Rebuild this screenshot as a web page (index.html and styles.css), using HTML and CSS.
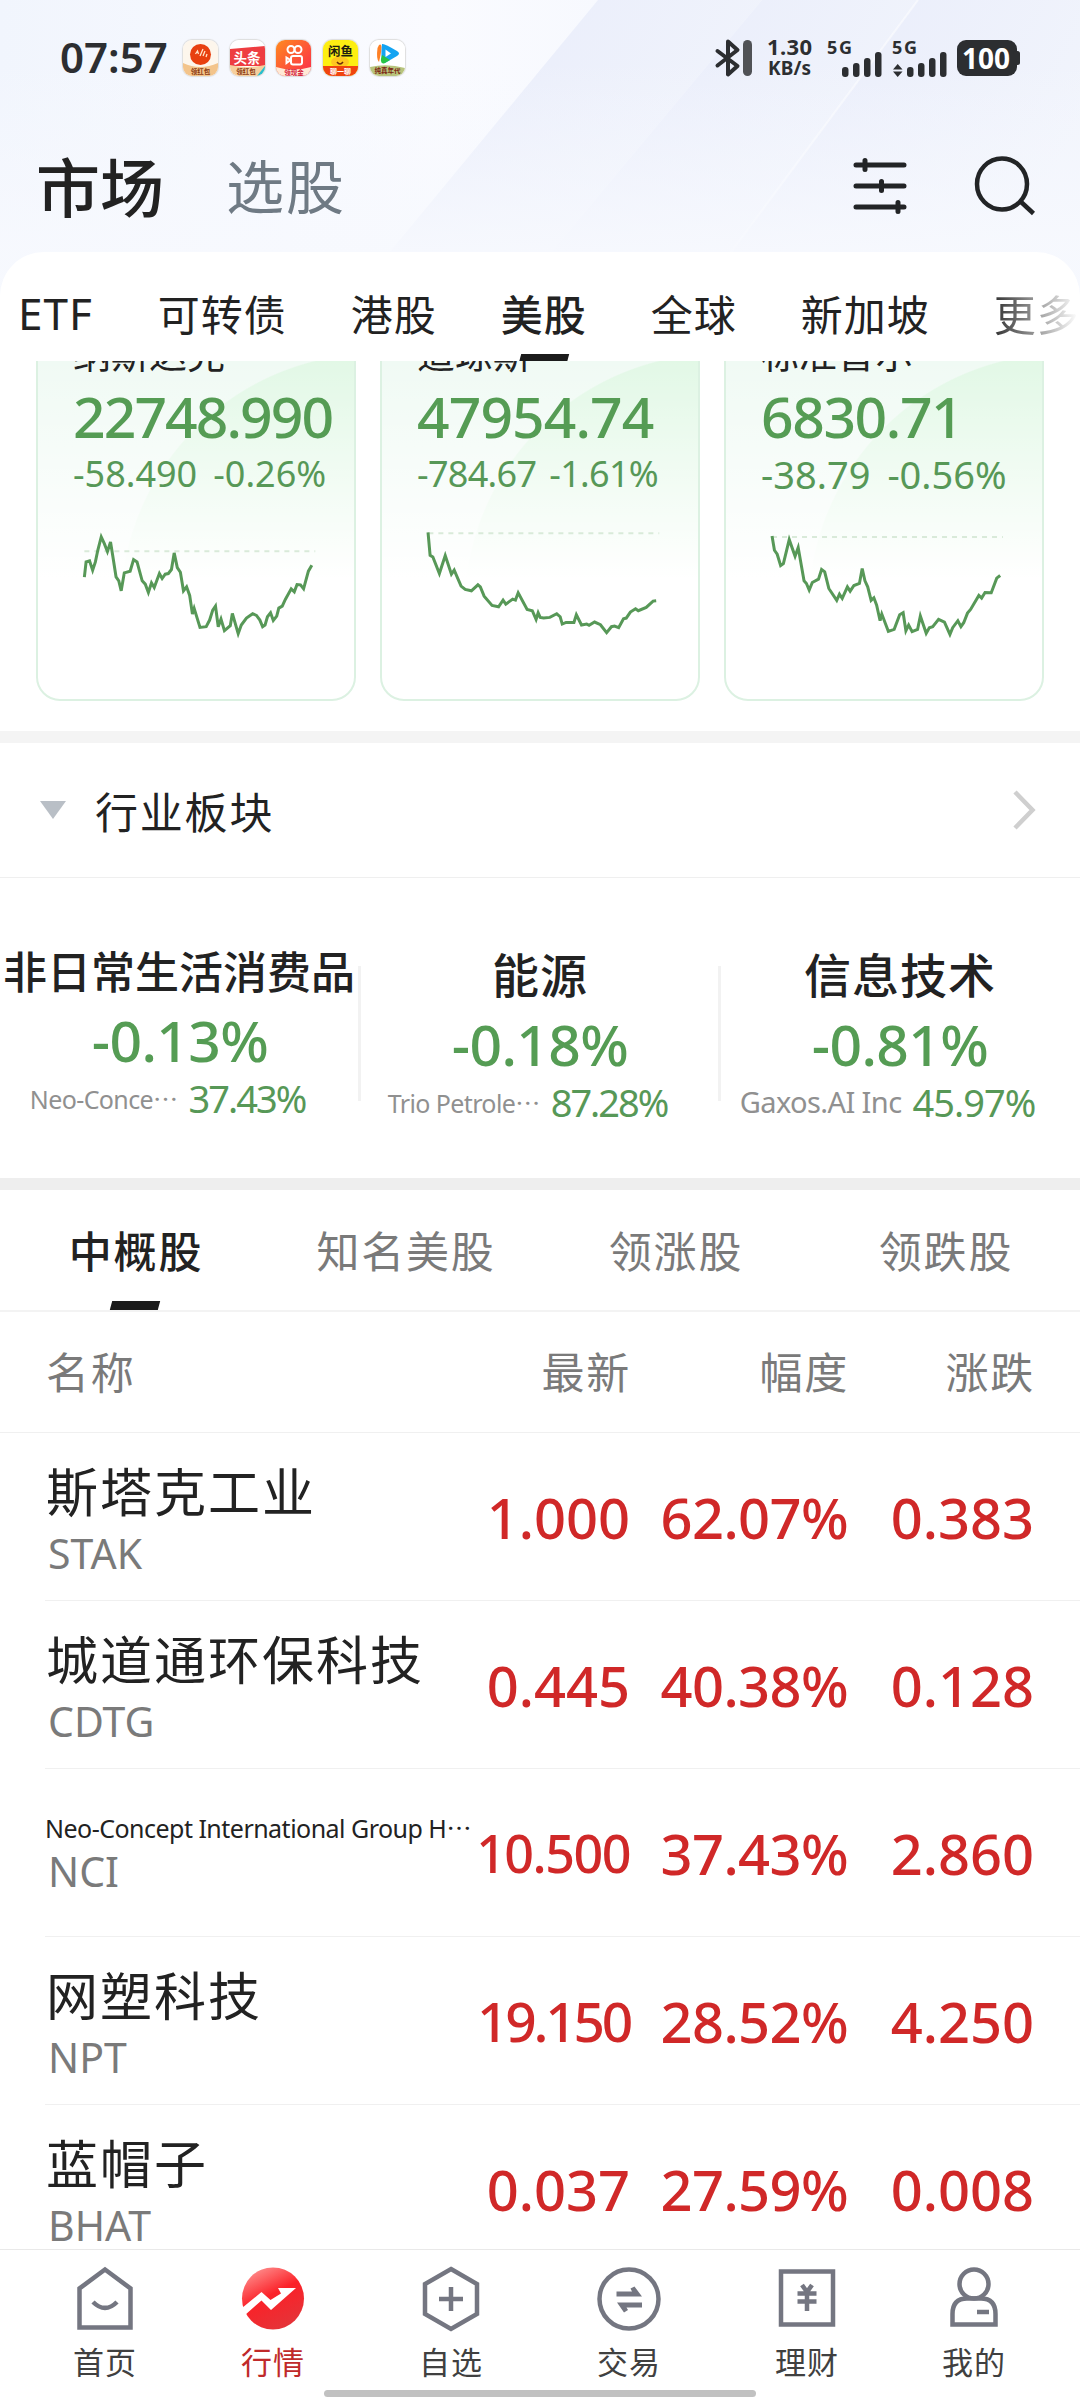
FILE: index.html
```html
<!DOCTYPE html>
<html lang="zh-CN">
<head>
  <meta charset="UTF-8">
  <title>市场</title>
  <link rel="stylesheet" href="styles.css">
</head>
<body>
<div class="page">
  <div class="top">
    <svg class="top-bg" viewBox="0 0 1080 310">
      <defs>
        <linearGradient id="base" x1="0" y1="0" x2="1" y2="0">
          <stop offset="0" stop-color="#f1f5fd"/>
          <stop offset="0.4" stop-color="#fafbff"/>
          <stop offset="1" stop-color="#eff3fc"/>
        </linearGradient>
        <linearGradient id="band" x1="0" y1="0" x2="1" y2="0.4">
          <stop offset="0" stop-color="#e6eafa"/>
          <stop offset="1" stop-color="#f1f4fc"/>
        </linearGradient>
        <linearGradient id="fade" x1="0" y1="0" x2="0" y2="1">
          <stop offset="0.2" stop-color="#f7f9fe" stop-opacity="0"/>
          <stop offset="0.8" stop-color="#f7f9fe" stop-opacity="0.9"/>
        </linearGradient>
      </defs>
      <rect width="1080" height="310" fill="url(#base)"/>
      <polygon points="598,0 762,0 503,310 342,310" fill="url(#band)"/>
      <polygon points="762,0 918,0 688,310 503,310" fill="url(#band)"/>
      <polygon points="918,0 1080,0 1080,310 688,310" fill="url(#band)"/>
      <path d="M918 0L688 310" stroke="#fff" stroke-width="2" opacity="0.5"/>
      <rect width="1080" height="310" fill="url(#fade)"/>
    </svg>
    <div class="status">
      <span class="clock">07:57</span>
      <div class="apps">
        <svg class="app" viewBox="0 0 35 36">
          <rect width="35" height="36" fill="#fdf6ec"/>
          <circle cx="17.500" cy="14.500" r="10.500" fill="#e8400f"/>
          <path d="M12.500 14l2-3 1 3M17 16l3-7M20 16l2-5M23 17l1-3" stroke="#ffe3c8" stroke-width="1.300" fill="none"/>
          <path d="M0 23Q17 31 35 23V36H0z" fill="#f3c48b"/>
          <text x="17.500" y="34" font-size="6.500" fill="#8c3a12">领红包</text>
        </svg>
        <svg class="app" viewBox="0 0 35 36">
          <rect width="35" height="36" fill="#fff"/>
          <path d="M0 9L35 6V26H0z" fill="#ee3d41"/>
          <text x="17" y="23" font-size="13.500" fill="#fff">头条</text>
          <path d="M0 25Q17 29 35 25V36H0z" fill="#f6cf9d"/>
          <text x="16" y="34" font-size="6.500" fill="#8c3a12">领红包</text>
          <path d="M27 36L35 26V36z" fill="#27bfd0"/>
        </svg>
        <svg class="app" viewBox="0 0 35 36">
          <defs>
            <linearGradient id="ks" x1="0" y1="0" x2="1" y2="1">
              <stop offset="0" stop-color="#ff8a1f"/>
              <stop offset="1" stop-color="#fb2a4c"/>
            </linearGradient>
          </defs>
          <rect width="35" height="36" fill="url(#ks)"/>
          <g fill="none" stroke="#fff" stroke-width="2">
            <circle cx="15" cy="9.500" r="3.500"/>
            <circle cx="22" cy="9.500" r="3.500"/>
            <rect x="15" y="16" width="11" height="8.500" rx="2"/>
            <path d="M14.500 20L10.500 17.500V23z"/>
          </g>
          <path d="M0 27Q17 32 35 27V36H0z" fill="#ffe9d6"/>
          <text x="18" y="34.500" font-size="6.500" fill="#d4203c">领现金</text>
        </svg>
        <svg class="app" viewBox="0 0 35 36">
          <rect width="35" height="36" fill="#fdee12"/>
          <text x="17.500" y="16" font-size="12.500" fill="#1d1d10">闲鱼</text>
          <ellipse cx="17" cy="22" rx="9" ry="5.500" fill="#ffc720"/>
          <path d="M14 22q3 4 6 0" stroke="#6b2c0c" stroke-width="1.500" fill="none"/>
          <path d="M0 26H35V36H0z" fill="#f0440f"/>
          <text x="17.500" y="34" font-size="7" fill="#fff">聊一聊</text>
        </svg>
        <svg class="app" viewBox="0 0 35 36">
          <rect width="35" height="36" fill="#fff"/>
          <path d="M9 5Q14 2 9 22Q6 19 7.500 8z" fill="#ff8125"/>
          <path d="M12 4Q14 3 27 11Q31 13.500 27 16L15 23Q10 24 12 4z" fill="#14a4f2"/>
          <path d="M12 15L20 20L14 23.500Q9 24 12 15z" fill="#28c445"/>
          <path d="M15.500 9.500L21 13.500L15.500 17z" fill="#fff"/>
          <path d="M0 27Q17 23 35 28V36H0z" fill="#b8c47c"/>
          <text x="17.500" y="32.500" font-size="6.500" fill="#7b1e12">纯真年代</text>
        </svg>
      </div>
      <svg class="system" viewBox="712 36 310 46">
        <path d="M717.500 51L737.500 66L728 74.500V41.500L737.500 50L717.500 65.500" fill="none" stroke="#2c2e31" stroke-width="4" stroke-linecap="round" stroke-linejoin="round"/>
        <rect x="743" y="40" width="9" height="36" rx="4.500" fill="#505256"/>
        <g class="sys-text">
          <text x="767" y="55" font-size="22" textLength="45">1.30</text>
          <text x="768" y="75" font-size="19" textLength="43">KB/s</text>
          <text x="827" y="54" font-size="18" textLength="25">5G</text>
          <text x="892" y="54" font-size="18" textLength="25">5G</text>
        </g>
        <g fill="#2c2e31">
          <rect x="842" y="67" width="6.500" height="10" rx="3"/>
          <rect x="853" y="63" width="6.500" height="14" rx="3"/>
          <rect x="864" y="58" width="6.500" height="19" rx="3"/>
          <rect x="875" y="52" width="6.500" height="25" rx="3"/>
          <path d="M893 69.500h9.500L897.700 64zM893 71.500h9.500L897.700 77z"/>
          <rect x="907" y="67" width="6.500" height="10" rx="3"/>
          <rect x="918" y="63" width="6.500" height="14" rx="3"/>
          <rect x="929" y="58" width="6.500" height="19" rx="3"/>
          <rect x="940" y="52" width="6.500" height="25" rx="3"/>
          <rect x="957" y="40" width="60" height="36" rx="9"/>
          <rect x="1013" y="51" width="7" height="14" rx="2.500"/>
        </g>
        <text class="battery" x="986" y="68.500" font-size="28" textLength="48">100</text>
      </svg>
    </div>
    <div class="nav">
      <span class="nav-on">市场</span>
      <span class="nav-off">选股</span>
      <svg class="nav-icon filter" viewBox="0 0 58 58">
        <path d="M4 8H52M4 29H52M4 50H52" stroke="#222426" stroke-width="5" stroke-linecap="round"/>
        <path d="M13 3.500V12.500M29.500 24.500V33.500M46 45.500V54.500" stroke="#222426" stroke-width="5" stroke-linecap="round"/>
      </svg>
      <svg class="nav-icon" viewBox="0 0 62 60">
        <ellipse cx="28" cy="28" rx="25" ry="25.500" fill="none" stroke="#222426" stroke-width="4.500"/>
        <path d="M46 45L59.500 57.500" stroke="#222426" stroke-width="4.500"/>
      </svg>
    </div>
    <div class="markets">
      <span class="latin">ETF</span>
      <span>可转债</span>
      <span>港股</span>
      <span class="on">美股</span>
      <span>全球</span>
      <span>新加坡</span>
      <span class="more">更多</span>
    </div>
  </div>

  <div class="content">
    <div class="cards">
      <div class="card">
        <div class="card-name">纳斯达克</div>
        <div class="card-value tight">22748.990</div>
        <div class="card-change"><span>-58.490</span><span>-0.26%</span></div>
        <svg class="chart" viewBox="240 860 680 340" preserveAspectRatio="none">
          <path class="base" d="M244 933H915"/>
          <path class="line" d="M244 1011L249 965L259 962L268 990L276 965L283 930L293 890L302 910L311 934L320 905L327 950L336 1010L344 1022L351 1052L360 998L377 993L387 958L397 965L412 1022L421 1032L430 1057L439 1028L447 1042L462 1000L470 1015L479 1002L488 1000L497 988L505 938L514 982L523 996L532 1052L541 1040L550 1066L558 1122L563 1105L580 1162L598 1160L608 1140L617 1110L625 1098L633 1160L641 1137L651 1172L668 1157L674 1120L691 1181L700 1155L715 1134L733 1121L744 1126L754 1140L762 1160L769 1155L776 1130L785 1118L793 1141L803 1128L809 1104L819 1098L828 1078L845 1046L854 1055L862 1033L872 1034L881 1046L895 993L905 975"/>
        </svg>
      </div>
      <div class="card">
        <div class="card-name">道琼斯</div>
        <div class="card-value">47954.74</div>
        <div class="card-change narrow"><span>-784.67</span><span>-1.61%</span></div>
        <svg class="chart" viewBox="1239 860 680 340" preserveAspectRatio="none">
          <path class="base" d="M1243 879H1914"/>
          <path class="line" d="M1242 876L1248 945L1256 950L1275 1000L1292 946L1310 1002L1318 990L1338 1038L1350 1048L1368 1052L1387 1034L1394 1040L1405 1068L1428 1096L1447 1100L1460 1080L1468 1092L1488 1077L1496 1080L1504 1058L1530 1108L1545 1112L1556 1138L1562 1118L1568 1132L1578 1134L1596 1132L1616 1121L1626 1130L1632 1152L1643 1147L1666 1147L1673 1124L1688 1155L1703 1152L1710 1156L1726 1146L1743 1154L1761 1178L1775 1160L1784 1158L1796 1163L1810 1136L1818 1134L1830 1116L1845 1106L1853 1112L1876 1102L1896 1083L1905 1082"/>
        </svg>
      </div>
      <div class="card">
        <div class="card-name">标准普尔</div>
        <div class="card-value short">6830.71</div>
        <div class="card-change big"><span>-38.79</span><span>-0.56%</span></div>
        <svg class="chart" viewBox="670 860 680 340" preserveAspectRatio="none">
          <path class="base" d="M673 890H1344"/>
          <path class="line" d="M673 887L680 930L688 942L698 976L706 970L723 898L740 948L749 922L766 1022L773 1030L781 1050L790 1027L808 1017L817 988L826 995L838 1045L861 1081L869 1062L877 1075L892 1040L900 1053L911 1036L927 1030L935 985L943 1022L951 1040L961 1081L969 1073L977 1095L987 1142L992 1122L1011 1174L1028 1168L1044 1124L1054 1118L1062 1172L1070 1155L1080 1175L1096 1168L1104 1128L1121 1180L1130 1163L1140 1160L1157 1138L1174 1146L1190 1183L1198 1163L1213 1142L1222 1160L1230 1148L1241 1119L1250 1108L1274 1066L1282 1074L1292 1057L1310 1058L1326 1014L1336 1006"/>
        </svg>
      </div>
    </div>

    <div class="section-head">
      <span class="caret"></span>
      <span class="section-title">行业板块</span>
      <svg class="arrow" viewBox="0 0 24 42">
        <path d="M3 3L20.500 21L3 39" fill="none" stroke="#cfcfcf" stroke-width="4.500"/>
      </svg>
    </div>
    <div class="sectors">
      <div class="sector sector-long">
        <div class="sector-name">非日常生活消费品</div>
        <div class="sector-pct">-0.13%</div>
        <div class="sector-lead"><span class="lead-name">Neo-Conce<i>⋯</i></span><span class="lead-pct">37.43%</span></div>
      </div>
      <div class="sector">
        <div class="sector-name">能源</div>
        <div class="sector-pct">-0.18%</div>
        <div class="sector-lead"><span class="lead-name">Trio Petrole<i>⋯</i></span><span class="lead-pct">87.28%</span></div>
      </div>
      <div class="sector">
        <div class="sector-name">信息技术</div>
        <div class="sector-pct">-0.81%</div>
        <div class="sector-lead"><span class="lead-name large">Gaxos.AI Inc</span><span class="lead-pct wide">45.97%</span></div>
      </div>
    </div>

    <div class="tabs">
      <span class="on">中概股</span>
      <span>知名美股</span>
      <span>领涨股</span>
      <span>领跌股</span>
    </div>
    <div class="row head">
      <span>名称</span><span>最新</span><span>幅度</span><span>涨跌</span>
    </div>
    <div class="list">
      <div class="row">
        <div class="stock"><b>斯塔克工业</b><small>STAK</small></div>
        <span>1.000</span><span class="pct">62.07%</span><span>0.383</span>
      </div>
      <div class="row">
        <div class="stock"><b>城道通环保科技</b><small>CDTG</small></div>
        <span>0.445</span><span class="pct">40.38%</span><span>0.128</span>
      </div>
      <div class="row">
        <div class="stock"><b class="mini">Neo-Concept International Group H<i>⋯</i></b><small>NCI</small></div>
        <span class="small">10.500</span><span class="pct">37.43%</span><span>2.860</span>
      </div>
      <div class="row">
        <div class="stock"><b>网塑科技</b><small>NPT</small></div>
        <span class="long">19.150</span><span class="pct">28.52%</span><span>4.250</span>
      </div>
      <div class="row">
        <div class="stock"><b>蓝帽子</b><small>BHAT</small></div>
        <span>0.037</span><span class="pct">27.59%</span><span>0.008</span>
      </div>
    </div>
  </div>

  <div class="tabbar">
    <div class="tab">
      <svg viewBox="0 0 66 66"><path d="M7.500 61.500V22.500L33 3.500L58.500 22.500V61.500z"/><path d="M21 36Q33 48 45 36"/></svg>
      <span>首页</span>
    </div>
    <div class="tab on">
      <svg viewBox="0 0 66 66">
        <defs>
          <linearGradient id="red" x1="0.1" y1="0" x2="0.6" y2="1">
            <stop offset="0" stop-color="#ff9c9a"/>
            <stop offset="0.5" stop-color="#fb2128"/>
            <stop offset="1" stop-color="#e53338"/>
          </linearGradient>
        </defs>
        <circle class="fill" cx="33" cy="32.500" r="31" fill="url(#red)"/>
        <path class="fill" fill="#fff" d="M2 42L21.500 26L30.500 34L41 27.500L38 22H56L31 44L21.500 34.500L5 49z"/>
      </svg>
      <span>行情</span>
    </div>
    <div class="tab">
      <svg viewBox="0 0 66 66"><path d="M33 3L59 18V48L33 63L7 48V18z"/><path d="M33 21V45M21 33H45"/></svg>
      <span>自选</span>
    </div>
    <div class="tab">
      <svg viewBox="0 0 66 66"><circle cx="33" cy="33" r="29.500"/><path class="fill dark" d="M20.500 25.500H36L34.500 22.500L38.500 20.500L46 30.500H20.500zM46 36.500H21L28 46.500L32 44L30.500 41.500H46z"/></svg>
      <span>交易</span>
    </div>
    <div class="tab">
      <svg viewBox="0 0 66 66"><rect x="7" y="5.500" width="52" height="53"/><path d="M28 19L33 26L38 19M23.500 27.500H42.500M23.500 35.500H42.500M33 26V45"/></svg>
      <span>理财</span>
    </div>
    <div class="tab">
      <svg viewBox="0 0 66 66"><circle cx="33" cy="18" r="14.500"/><path d="M11.500 58.500V48Q11.500 32.500 26 32.500H40Q54.500 32.500 54.500 48V58.500z"/><path d="M36 46H48"/></svg>
      <span>我的</span>
    </div>
  </div>
  <div class="home-bar"></div>
</div>
</body>
</html>
```
FILE: styles.css
```css
* {
  box-sizing: border-box;
}

body {
  margin: 0;
  background-color: #fff;
  color: #222;
  font-family: "Noto Sans", "Noto Sans CJK SC", sans-serif;
}

.page {
  position: relative;
  display: flex;
  flex-direction: column;
  width: 1080px;
  height: 2400px;
  overflow: hidden;
}

i {
  font-style: normal;
  font-family: "Noto Sans CJK SC", sans-serif;
}

/* top */
.top {
  position: relative;
  z-index: 1;
  height: 361px;
}

.top-bg {
  position: absolute;
  top: 0;
  left: 0;
  width: 1080px;
  height: 310px;
  z-index: -1;
}

.status {
  display: flex;
  align-items: center;
  height: 116px;
  padding-left: 60px;
}

.clock {
  width: 123px;
  margin-top: -4px;
  font-size: 42px;
  font-weight: 600;
  color: #2c2e31;
}

.apps {
  display: flex;
  gap: 11.7px;
}

.app {
  width: 35px;
  height: 36px;
  border-radius: 9px;
  box-shadow: 0 0 1px 1px #ddd;
}

.app text {
  text-anchor: middle;
  font-weight: 700;
}

.system {
  width: 310px;
  height: 46px;
  margin-left: auto;
  margin-right: 58px;
  margin-top: 2px;
}

.sys-text {
  fill: #2c2e31;
  font-weight: 700;
}

.battery {
  fill: #fff;
  font-weight: 700;
  text-anchor: middle;
}

.nav {
  display: flex;
  align-items: center;
  height: 136px;
  padding: 0 44px 0 36px;
}

.nav-on {
  font-size: 64px;
  font-weight: 500;
}

.nav-off {
  margin-left: 62px;
  font-size: 58px;
  letter-spacing: 2px;
  color: #6f7a84;
}

.nav-icon {
  width: 62px;
  height: 60px;
  margin-top: 3px;
}

.filter {
  width: 58px;
  height: 58px;
  margin-left: auto;
  margin-right: 64px;
}

.markets {
  display: flex;
  align-items: center;
  gap: 64px;
  height: 109px;
  padding: 12px 0 0 18px;
  background-color: #fff;
  border-radius: 44px 44px 0 0;
  overflow: hidden;
  font-size: 42px;
  letter-spacing: 1px;
  white-space: nowrap;
}

.latin {
  font-size: 44px;
  margin-right: 1px;
}

.markets .on {
  position: relative;
  font-weight: 500;
}

.markets .on::after,
.tabs .on::after {
  content: "";
  position: absolute;
  left: 50%;
  width: 48px;
  height: 9px;
  margin-left: -24px;
  background-color: #1b1b1b;
  transform: skewX(-15deg);
}

.markets .on::after {
  bottom: -20px;
}

.more {
  background: linear-gradient(to right, #333, #fff 84px);
  -webkit-background-clip: text;
  background-clip: text;
  color: transparent;
}

/* content */
.content {
  flex: 1;
  min-height: 0;
  overflow: hidden;
}

.cards {
  display: flex;
  gap: 24px;
  height: 382px;
  padding: 0 36px;
  border-bottom: 12px solid #f4f4f4;
}

.card {
  width: 320px;
  height: 394px;
  margin-top: -54px;
  padding: 22px 0 0 35px;
  border: 2px solid #dcf1e2;
  border-radius: 24px;
  background:
    linear-gradient(rgba(255, 255, 255, 0) 50px, #fff 270px),
    radial-gradient(circle 256px at 338px 300px, #e2f8e6 99.5%, rgba(226, 248, 230, 0)),
    #f0faf4;
}

.card-name {
  height: 44px;
  font-size: 38px;
  line-height: 44px;
}

.card-value {
  height: 66px;
  margin-top: 8px;
  font-size: 57px;
  font-weight: 500;
  line-height: 66px;
  letter-spacing: -0.9px;
  color: #559c54;
}

.card-value.tight {
  letter-spacing: -1.9px;
}

.card-value.short {
  letter-spacing: -1.4px;
}

.card-change {
  display: flex;
  gap: 16px;
  height: 52px;
  font-size: 36px;
  line-height: 50px;
  color: #579857;
}

.card-change.narrow {
  gap: 13px;
  letter-spacing: -0.7px;
}

.card-change.big {
  gap: 17px;
  font-size: 38px;
  line-height: 51px;
}

.chart {
  display: block;
  width: 234px;
  height: 113px;
  margin: 26px 0 0 10px;
  overflow: visible;
}

.chart path {
  fill: none;
  vector-effect: non-scaling-stroke;
}

.base {
  stroke: #d9ead9;
  stroke-width: 2;
  stroke-dasharray: 5 5;
}

.line {
  stroke: #579857;
  stroke-width: 3;
}

.section-head {
  display: flex;
  align-items: center;
  height: 135px;
  padding: 0 44px 0 40px;
  border-bottom: 1px solid #efefef;
}

.caret {
  border: 13px solid transparent;
  border-top: 18px solid #b9bfc6;
  border-bottom: none;
}

.section-title {
  margin-left: 29px;
  font-size: 43px;
  letter-spacing: 1.8px;
}

.arrow {
  width: 24px;
  height: 42px;
  margin-left: auto;
}

.sectors {
  display: flex;
  height: 312px;
  border-bottom: 12px solid #eee;
}

.sector {
  position: relative;
  width: 360px;
  padding-top: 65px;
  text-align: center;
  white-space: nowrap;
}

.sector + .sector::before {
  content: "";
  position: absolute;
  left: -2px;
  top: 88px;
  width: 3px;
  height: 135px;
  background-color: #f2f2f2;
}

.sector-name {
  height: 65px;
  font-size: 47px;
  font-weight: 500;
  line-height: 64px;
  letter-spacing: 1px;
}

.sector-pct {
  height: 72px;
  font-size: 57px;
  font-weight: 500;
  line-height: 72px;
  letter-spacing: -0.6px;
  color: #559c54;
}

.sector-lead {
  display: flex;
  justify-content: center;
  align-items: center;
  gap: 11px;
  height: 50px;
  line-height: 50px;
  margin-top: -3px;
  padding-right: 25px;
}

.sector-long {
  padding-top: 61px;
}

.sector-long .sector-name {
  margin-left: -2px;
  font-size: 44px;
  line-height: 67px;
  letter-spacing: 0;
}

.lead-name {
  font-size: 25px;
  letter-spacing: -0.6px;
  color: #909090;
}

.lead-name.large {
  font-size: 29px;
}

.lead-pct {
  font-size: 38px;
  letter-spacing: -2px;
  color: #579857;
}

.lead-pct.wide {
  letter-spacing: -1px;
}

.tabs {
  display: flex;
  height: 122px;
  border-bottom: 2px solid #f3f3f3;
  font-size: 43px;
  line-height: 124px;
  letter-spacing: 1.8px;
  text-align: center;
  color: #7a7a7a;
}

.tabs span {
  position: relative;
  width: 270px;
  padding-left: 2px;
}

.tabs .on {
  font-weight: 500;
  color: #222;
}

.tabs .on::after {
  bottom: 0;
}

.row {
  display: grid;
  grid-template-columns: 430px 155px 218px 186px;
  align-items: center;
  height: 168px;
  margin-left: 45px;
  border-bottom: 1px solid #f0f0f0;
  white-space: nowrap;
}

.row > span {
  text-align: right;
  font-size: 56px;
  font-weight: 500;
  color: #d02828;
}

.row > .pct {
  letter-spacing: -0.6px;
}

.row > .long {
  font-size: 55px;
  letter-spacing: -3.2px;
}

.row > .small {
  font-size: 52px;
  letter-spacing: -1.5px;
}

.row.head {
  height: 121px;
  margin-left: 0;
  padding: 0 0 3px 46px;
}

.row.head > span {
  font-size: 43px;
  font-weight: 400;
  letter-spacing: 1.8px;
  color: #7a7a7a;
}

.row.head > span:first-child {
  text-align: left;
}

.stock {
  padding: 4px 0 0 1px;
}

.stock b {
  display: block;
  height: 68px;
  font-size: 52px;
  font-weight: 400;
  line-height: 68px;
  letter-spacing: 2px;
}

.stock small {
  display: block;
  height: 54px;
  margin-left: 2px;
  font-size: 41px;
  line-height: 54px;
  color: #7a7a7a;
}

.stock .mini {
  height: 32px;
  margin-left: -1px;
  font-size: 25px;
  line-height: 30px;
  letter-spacing: -0.52px;
}

/* bottom bar */
.tabbar {
  display: grid;
  grid-template-columns: 158px 178px 178px 178px 178px 156px;
  height: 151px;
  padding: 16px 0 0 26px;
  border-top: 1px solid #e9e9e9;
  background-color: #fff;
}

.tab {
  display: flex;
  flex-direction: column;
  align-items: center;
  font-size: 31px;
  line-height: 40px;
  letter-spacing: 1px;
  color: #404040;
}

.tab svg {
  width: 66px;
  height: 66px;
  margin-bottom: 10px;
  fill: none;
  stroke: #747681;
  stroke-width: 4.5;
}

.tab .fill {
  stroke: none;
}

.tab .dark {
  fill: #747681;
}

.tab.on {
  color: #c02a2a;
}

.home-bar {
  position: absolute;
  left: 324px;
  bottom: 3px;
  width: 432px;
  height: 7px;
  border-radius: 4px;
  background-color: #c1c1c1;
}
```
